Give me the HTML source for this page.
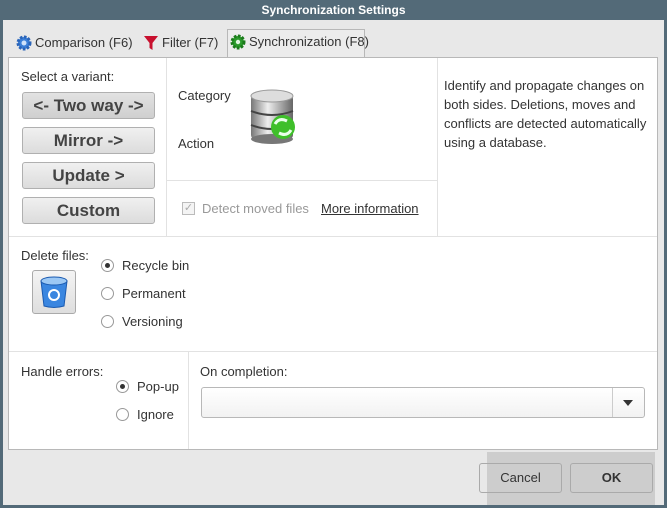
<!DOCTYPE html>
<html><head><style>
*{box-sizing:border-box;margin:0;padding:0}
body{width:667px;height:508px;overflow:hidden;font-family:"Liberation Sans",sans-serif;font-size:13px;color:#333;background:#536a78;position:relative}
.a{position:absolute}
.win{left:3px;top:20px;width:661px;height:485px;background:#e8e8e8}
.title{left:0;top:0;width:667px;height:20px;color:#fff;font-weight:bold;font-size:12px;text-align:center;line-height:21px}
.panel{left:8px;top:57px;width:650px;height:393px;background:#fff;border:1px solid #b8b8b8}
.btn{position:absolute;left:22px;width:133px;height:27px;border:1px solid #b0b0b0;border-radius:3px;background:linear-gradient(#f0f0f0,#dcdcdc);font-weight:bold;font-size:17px;text-align:center;line-height:25px;color:#444}
.hl{position:absolute;height:1px;background:#e2e2e2}
.vl{position:absolute;width:1px;background:#e2e2e2}
.rad{position:absolute;width:13px;height:13px;border:1px solid #999;border-radius:50%;background:#fff}
.rad.on::after{content:"";position:absolute;left:3px;top:3px;width:5px;height:5px;border-radius:50%;background:#333}
.t{position:absolute;white-space:nowrap}
</style></head><body>
<div class="a title">Synchronization Settings</div>
<div class="a win"></div>
<div class="a" style="left:227px;top:29px;width:138px;height:28px;background:#ececec;border:1px solid #b8b8b8;border-bottom:none"></div>
<svg class="a" style="left:16px;top:35px" width="16" height="16" viewBox="0 0 16 16"><circle cx="8" cy="8" r="6" fill="#3b7fd8" stroke="#2a64b8" stroke-width="3" stroke-dasharray="2.5 1.5"/><circle cx="8" cy="8" r="2.5" fill="#cfe2fa"/></svg>
<div class="t" style="left:35px;top:35px">Comparison (F6)</div>
<svg class="a" style="left:143px;top:35px" width="16" height="16" viewBox="0 0 16 16"><path d="M1 1h14L9.5 8v7L6.5 13V8z" fill="#c8102e"/></svg>
<div class="t" style="left:162px;top:35px">Filter (F7)</div>
<svg class="a" style="left:230px;top:34px" width="16" height="16" viewBox="0 0 16 16"><circle cx="8" cy="8" r="6" fill="#2a9a2a" stroke="#1b7a1b" stroke-width="3" stroke-dasharray="2.5 1.5"/><circle cx="8" cy="8" r="2.2" fill="#dff5df"/></svg>
<div class="t" style="left:249px;top:34px">Synchronization (F8)</div>
<div class="a panel"></div>
<div class="vl" style="left:166px;top:58px;height:178px"></div>
<div class="vl" style="left:437px;top:58px;height:178px"></div>
<div class="hl" style="left:166px;top:180px;width:271px"></div>
<div class="hl" style="left:9px;top:236px;width:648px"></div>
<div class="hl" style="left:9px;top:351px;width:648px"></div>
<div class="vl" style="left:188px;top:352px;height:97px"></div>
<div class="t" style="left:21px;top:69px">Select a variant:</div>
<div class="btn" style="top:92px;background:linear-gradient(#e2e2e2,#cfcfcf)">&lt;- Two way -&gt;</div>
<div class="btn" style="top:127px">Mirror -&gt;</div>
<div class="btn" style="top:162px">Update &gt;</div>
<div class="btn" style="top:197px">Custom</div>
<div class="t" style="left:178px;top:88px">Category</div>
<div class="t" style="left:178px;top:136px">Action</div>
<svg class="a" style="left:249px;top:89px" width="48" height="56" viewBox="0 0 48 56"><defs><linearGradient id="g" x1="0" x2="1"><stop offset="0" stop-color="#777"/><stop offset=".4" stop-color="#eee"/><stop offset="1" stop-color="#666"/></linearGradient></defs>
<rect x="2" y="6" width="42" height="44" rx="4" fill="url(#g)"/><ellipse cx="23" cy="7" rx="21" ry="6" fill="#ddd" stroke="#999"/><path d="M2 22q21 8 42 0M2 36q21 8 42 0" stroke="#444" stroke-width="2" fill="none"/><ellipse cx="23" cy="50" rx="21" ry="5" fill="#777"/>
<circle cx="34" cy="38" r="12" fill="#3fbf2a"/><path d="M26 35q4-7 12-3M42 41q-4 7-12 3" stroke="#eaffea" stroke-width="3" fill="none"/></svg>
<div class="a" style="left:182px;top:202px;width:13px;height:13px;border:1px solid #bbb;background:#f4f4f4;color:#aaa;font-size:11px;line-height:11px;text-align:center">✓</div>
<div class="t" style="left:202px;top:201px;color:#999">Detect moved files</div>
<div class="t" style="left:321px;top:201px;color:#333;text-decoration:underline">More information</div>
<div class="t" style="left:444px;top:76px;line-height:19px;white-space:normal;width:215px">Identify and propagate changes on both sides. Deletions, moves and conflicts are detected automatically using a database.</div>
<div class="t" style="left:21px;top:248px">Delete files:</div>
<div class="a" style="left:32px;top:270px;width:44px;height:44px;border:1px solid #aaa;border-radius:3px;background:linear-gradient(#f4f4f4,#dedede)"></div>
<svg class="a" style="left:38px;top:275px" width="32" height="34" viewBox="0 0 32 34"><path d="M3 6h26l-3 25q-10 3-20 0z" fill="#3a86e0" stroke="#1a5ab0"/><ellipse cx="16" cy="6" rx="13" ry="4" fill="#9cc8f4" stroke="#1a5ab0"/><circle cx="16" cy="20" r="5" fill="none" stroke="#fff" stroke-width="2"/></svg>
<div class="rad on" style="left:101px;top:259px"></div><div class="t" style="left:122px;top:258px">Recycle bin</div>
<div class="rad" style="left:101px;top:287px"></div><div class="t" style="left:122px;top:286px">Permanent</div>
<div class="rad" style="left:101px;top:315px"></div><div class="t" style="left:122px;top:314px">Versioning</div>
<div class="t" style="left:21px;top:364px">Handle errors:</div>
<div class="rad on" style="left:116px;top:380px"></div><div class="t" style="left:137px;top:379px">Pop-up</div>
<div class="rad" style="left:116px;top:408px"></div><div class="t" style="left:137px;top:407px">Ignore</div>
<div class="t" style="left:200px;top:364px">On completion:</div>
<div class="a" style="left:201px;top:387px;width:444px;height:31px;border:1px solid #b8b8b8;border-radius:3px;background:linear-gradient(#fff,#f2f2f2)"></div>
<div class="vl" style="left:612px;top:388px;height:29px;background:#ccc"></div>
<div class="a" style="left:623px;top:400px;width:0;height:0;border-left:5px solid transparent;border-right:5px solid transparent;border-top:6px solid #333"></div>
<div class="a" style="left:487px;top:452px;width:168px;height:53px;background:#cdcdcd"></div>
<div class="a" style="left:479px;top:463px;width:83px;height:30px;border:1px solid #aaa;border-radius:3px;text-align:center;line-height:28px">Cancel</div>
<div class="a" style="left:570px;top:463px;width:83px;height:30px;border:1px solid #aaa;border-radius:3px;text-align:center;line-height:28px;font-weight:bold">OK</div>
</body></html>
